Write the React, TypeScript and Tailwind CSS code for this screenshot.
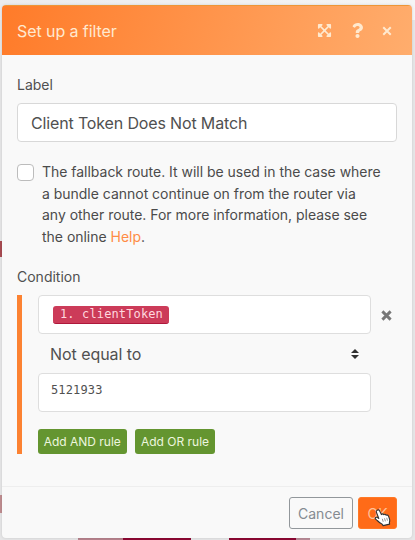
import React from 'react';
import { FaExpandArrowsAlt, FaQuestion } from 'react-icons/fa';

function Canvas() {
  return (
    <div className="absolute inset-0 bg-[#e6e6e7]">
      <div className="absolute inset-x-0 top-0 h-5 bg-gradient-to-r from-[#ebebee] to-[#f5f5f5]" />
      <div className="absolute left-0 top-[241px] h-4 w-2 bg-[#a94c52]" />
      <div className="absolute left-0 top-[495px] h-[18px] w-2 bg-[#bf8d90]" />
      <div className="absolute left-[78px] top-[538px] h-[2px] w-[46px] bg-[#b7838d]" />
      <div className="absolute left-[123px] top-[538px] h-[2px] w-[68px] bg-[#8d0833]" />
      <div className="absolute left-[229px] top-[538px] h-[2px] w-[67px] bg-[#8d0833]" />
      <div className="absolute left-[296px] top-[538px] h-[2px] w-[14px] bg-[#b98c98]" />
    </div>
  );
}

function Cross({ size, weight }: { size: number; weight: number }) {
  return (
    <svg width={size} height={size} viewBox="0 0 12 12" fill="none" stroke="currentColor" strokeWidth={weight}>
      <path d="M1.5 1.5l9 9M10.5 1.5l-9 9" />
    </svg>
  );
}

function Hand() {
  return (
    <svg className="absolute left-[15px] top-[11px]" width="19" height="18" viewBox="0 0 19 18">
      <path
        d="M3.2 1.2C4.3.5 5.3 1.2 5.8 2.3L7.4 5.6c.6-1 1.9-.9 2.5.1.8-.7 1.8-.4 2.3.5.9-.5 1.9 0 2.3.9l1.1 3.2c.4 1.4.1 2.3-.2 3.3l.2 1.5-6.5 1.5-.9-1.4c-1.8-.8-3.4-2.1-5-3.7-1.1-1-2.2-1.5-2-2.5.4-1.2 1.8-.9 3.6.5L2.4 3.3c-.4-.9-.1-1.6.8-2.1z"
        fill="#fff"
        stroke="#343434"
        strokeWidth="1.1"
        strokeLinejoin="round"
      />
      <path d="M8.3 9.8l.9 3M10.5 9.3l.9 3M12.7 8.8l.8 2.8" stroke="#777" strokeWidth=".8" />
    </svg>
  );
}

export default function App() {
  return (
    <div className="relative h-[540px] w-[415px] overflow-hidden font-['Inter',sans-serif] text-[#505050]">
      <Canvas />
      <div className="relative ml-[2px] h-[538px] w-[410px] pt-[5px]">
        <div className="flex h-[533px] w-[410px] flex-col overflow-hidden rounded-[4px] bg-[#f9f9f9] shadow-[0_0_3px_#0002]">
          <header className="flex h-[50px] shrink-0 items-center border-t border-[#ed9637] bg-[linear-gradient(105deg,#ff7b29,#ffad6d)] pl-[15px] pr-[20px] text-[#ffe9cf]">
            <h1 className="flex-1 text-[16px] tracking-[-0.08px]">Set up a filter</h1>
            <FaExpandArrowsAlt size={15} />
            <FaQuestion size={15} className="ml-[17.5px]" />
            <span className="ml-[17.5px]"><Cross size={10} weight={2.4} /></span>
          </header>

          <main className="flex h-[431px] shrink-0 flex-col px-[15px] pt-[20px]">
            <label className="h-[28px] text-[14px] leading-[20px]">Label</label>
            <div className="flex h-[39px] w-[380px] shrink-0 items-center rounded-[4px] border border-[#d8d8d8] bg-white px-[13px] text-[16px] tracking-[-0.15px]">
              Client Token Does Not Match
            </div>

            <div className="mt-[19px] flex">
              <span className="mt-[3px] h-[17px] w-[17px] shrink-0 rounded-[4px] border border-[#bcbcbc] bg-white" />
              <p className="ml-[8px] whitespace-nowrap text-[14px] leading-[21.5px] tracking-[-0.02px] text-[#4b4b4b]">
                The fallback route. It will be used in the case where<br />
                a bundle cannot continue on from the router via<br />
                any other route. For more information, please see<br />
                the online <a className="text-[#ff8c45]">Help</a>.
              </p>
            </div>

            <div className="mt-[19px] h-[29px] text-[14px] leading-[21px]">Condition</div>

            <section className="flex h-[159px] shrink-0 border-l-[5px] border-[#fc8232] pl-[15.5px]">
              <div className="w-[333.5px]">
                <div className="flex h-[39px] items-center rounded-[4px] border border-[#dedede] bg-white pl-[14.5px]">
                  <span className="h-[18px] w-[116px] whitespace-nowrap rounded-[3px] border-b border-[#ae173b] bg-[#cc3b59] pl-[7px] font-['DejaVu_Sans_Mono',monospace] text-[12px] leading-[17px] tracking-[0.13px] text-[#ffd8df]">
                    1. clientToken
                  </span>
                </div>
                <div className="flex h-[39px] items-center justify-between pl-[12.5px] pr-[12px] text-[16px] tracking-[-0.05px]">
                  <span>Not equal to</span>
                  <svg width="8" height="10" viewBox="0 0 8 10" fill="#303030">
                    <path d="M0 4L4 0l4 4zM0 6h8l-4 4z" />
                  </svg>
                </div>
                <div className="h-[39px] rounded-[4px] border border-[#dedede] bg-white pl-[12.5px] pt-[6px] font-['DejaVu_Sans_Mono',monospace] text-[12px] leading-[21px] tracking-[0.13px]">
                  5121933
                </div>
                <div className="mt-[17px] flex gap-[8px] text-[12px] text-[#edf6df]">
                  <button className="h-[25px] w-[89.5px] whitespace-nowrap rounded-[3px] bg-[#649530]">Add AND rule</button>
                  <button className="h-[25px] w-[80px] whitespace-nowrap rounded-[3px] bg-[#649530]">Add OR rule</button>
                </div>
              </div>
              <span className="ml-[10px] mt-[15px] text-[#777]"><Cross size={11} weight={3.1} /></span>
            </section>
          </main>

          <footer className="flex flex-1 gap-[5px] border-t border-[#eeeeee] pl-[287px] pt-[10px] text-[14px]">
            <button className="h-[32px] w-[64px] rounded-[3px] border border-[#92979b] text-[#858b91]">Cancel</button>
            <button className="relative h-[32px] w-[39px] rounded-[3px] border border-[#ff7926] bg-[#ff6b18] text-[#ffc198]">
              OK
              <Hand />
            </button>
          </footer>
        </div>
      </div>
    </div>
  );
}
